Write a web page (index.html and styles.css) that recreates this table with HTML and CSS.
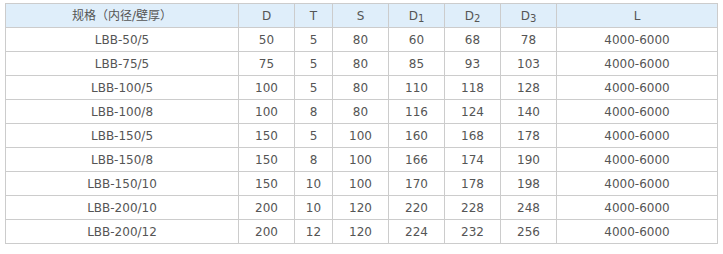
FILE: index.html
```html
<!DOCTYPE html>
<html lang="zh">
<head>
<meta charset="utf-8">
<title>LBB</title>
<link rel="stylesheet" href="styles.css">
</head>
<body>
<table class="spec">
<colgroup>
<col class="c-name"><col class="c-n"><col class="c-t"><col class="c-n"><col class="c-n"><col class="c-n"><col class="c-n"><col class="c-l">
</colgroup>
<thead>
<tr><th>规格（内径/壁厚）</th><th>D</th><th>T</th><th>S</th><th>D<sub>1</sub></th><th>D<sub>2</sub></th><th>D<sub>3</sub></th><th>L</th></tr>
</thead>
<tbody>
<tr><td>LBB-50/5</td><td>50</td><td>5</td><td>80</td><td>60</td><td>68</td><td>78</td><td>4000-6000</td></tr>
<tr><td>LBB-75/5</td><td>75</td><td>5</td><td>80</td><td>85</td><td>93</td><td>103</td><td>4000-6000</td></tr>
<tr><td>LBB-100/5</td><td>100</td><td>5</td><td>80</td><td>110</td><td>118</td><td>128</td><td>4000-6000</td></tr>
<tr><td>LBB-100/8</td><td>100</td><td>8</td><td>80</td><td>116</td><td>124</td><td>140</td><td>4000-6000</td></tr>
<tr><td>LBB-150/5</td><td>150</td><td>5</td><td>100</td><td>160</td><td>168</td><td>178</td><td>4000-6000</td></tr>
<tr><td>LBB-150/8</td><td>150</td><td>8</td><td>100</td><td>166</td><td>174</td><td>190</td><td>4000-6000</td></tr>
<tr><td>LBB-150/10</td><td>150</td><td>10</td><td>100</td><td>170</td><td>178</td><td>198</td><td>4000-6000</td></tr>
<tr><td>LBB-200/10</td><td>200</td><td>10</td><td>120</td><td>220</td><td>228</td><td>248</td><td>4000-6000</td></tr>
<tr><td>LBB-200/12</td><td>200</td><td>12</td><td>120</td><td>224</td><td>232</td><td>256</td><td>4000-6000</td></tr>
</tbody>
</table>
</body>
</html>
```
FILE: styles.css
```css
html, body {
  margin: 0;
  padding: 0;
  background: #ffffff;
}
body {
  padding: 3px 0 0 5px;
  font-family: "DejaVu Sans", "Noto Sans CJK SC", sans-serif;
  font-size: 12px;
  color: #555555;
}
.spec {
  border-collapse: collapse;
  table-layout: fixed;
  width: 712px;
}
.c-name { width: 233px; }
.c-n { width: 56px; }
.c-t { width: 38px; }
.c-l { width: 161px; }
.spec th,
.spec td {
  border: 1px solid #cccccc;
  padding: 0;
  height: 23px;
  text-align: center;
  vertical-align: middle;
  font-weight: normal;
  line-height: 14px;
  white-space: nowrap;
}
.spec thead th {
  background: #dfeefa;
}
.spec sub {
  font-size: 10px;
  vertical-align: -2px;
  line-height: 0;
}
```
